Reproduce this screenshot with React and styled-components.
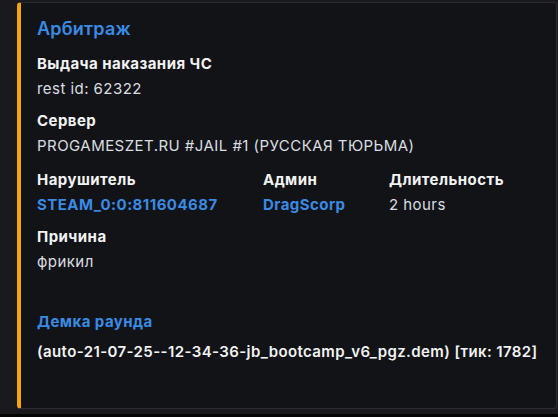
import React from "react"
import styled, { createGlobalStyle } from "styled-components"

const GlobalStyle = createGlobalStyle`
  html, body {
    margin: 0;
    padding: 0;
    background: #050506;
  }
  body {
    font-family: Inter, "Noto Sans", sans-serif;
  }
`

const colors = {
  page: "#1a1a1e",
  embed: "#121316",
  border: "#2b2d31",
  accent: "#f6a50b",
  link: "#3a8be5",
  name: "#f2f3f5",
  value: "#dbdee1",
}

const Page = styled.div`
  box-sizing: border-box;
  height: 414px;
  background: ${colors.page};
  padding: 2px 1px 0 17px;
`

const Embed = styled.article`
  box-sizing: border-box;
  height: 407px;
  background: ${colors.embed};
  border: 1px solid ${colors.border};
  border-left: 4px solid ${colors.accent};
  border-radius: 4px;
  padding: 13px 16px 16px 16px;
`

const Title = styled.h1`
  margin: 0;
  font-size: 18px;
  line-height: 26px;
  font-weight: 600;
  letter-spacing: 0.2px;
  color: ${colors.link};
`

const Fields = styled.div`
  display: grid;
  grid-template-columns: 226px 126px 1fr;
  row-gap: 10px;
  margin-top: 11px;
`

const Field = styled.div`
  grid-column: ${(p) => (p.$inline ? "auto" : "1 / -1")};
  margin-top: ${(p) => (p.$inline ? "2px" : "0")};
`

const Name = styled.div`
  font-size: 15px;
  line-height: 22px;
  font-weight: 700;
  letter-spacing: 0.45px;
  color: ${(p) => (p.$link ? colors.link : colors.name)};
  margin-bottom: 3px;
`

const Value = styled.div`
  font-size: 15px;
  line-height: 22px;
  letter-spacing: 0.45px;
  font-weight: ${(p) => (p.$strong ? 700 : 400)};
  color: ${(p) => (p.$link ? colors.link : p.$strong ? colors.name : colors.value)};
  white-space: nowrap;
`

const Demo = styled.div`
  margin-top: 38px;
`

const DemoValue = styled(Value)`
  font-weight: 600;
  letter-spacing: 0.4px;
  margin-top: 8px;
`

const fields = [
  { name: "Выдача наказания ЧС", value: "rest id: 62322" },
  { name: "Сервер", value: "PROGAMESZET.RU #JAIL #1 (РУССКАЯ ТЮРЬМА)" },
  { name: "Нарушитель", value: "STEAM_0:0:811604687", inline: true, link: true },
  { name: "Админ", value: "DragScorp", inline: true, link: true },
  { name: "Длительность", value: "2 hours", inline: true },
  { name: "Причина", value: "фрикил" },
]

const App = () => {
  return (
    <>
      <GlobalStyle />
      <Page>
        <Embed>
          <Title>Арбитраж</Title>
          <Fields>
            {fields.map((f, i) => (
              <Field key={i} $inline={f.inline}>
                <Name>{f.name}</Name>
                <Value $link={f.link} $strong={f.link}>
                  {f.value}
                </Value>
              </Field>
            ))}
          </Fields>
          <Demo>
            <Name $link>Демка раунда</Name>
            <DemoValue $strong>
              (auto-21-07-25--12-34-36-jb_bootcamp_v6_pgz.dem) [тик: 1782]
            </DemoValue>
          </Demo>
        </Embed>
      </Page>
    </>
  )
}

export default App
